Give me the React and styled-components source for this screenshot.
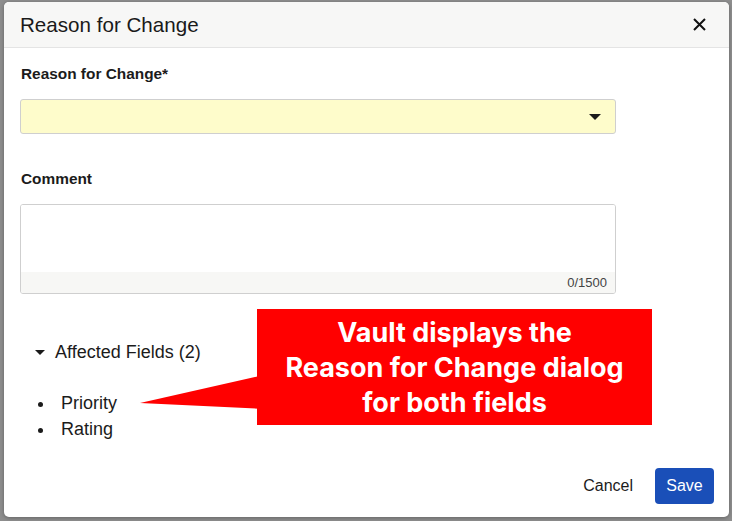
import React from 'react';
import styled, { createGlobalStyle } from 'styled-components';

const GlobalStyle = createGlobalStyle`
  html, body {
    margin: 0;
    padding: 0;
    background: #8e8e8e;
  }
  body {
    font-family: "Liberation Sans", Arial, sans-serif;
    color: #1b1b1b;
  }
`;

const Backdrop = styled.div`
  width: 732px;
  height: 521px;
  box-sizing: border-box;
  padding: 2px 3px 4px 4px;
  background: #8e8e8e;
`;

const Dialog = styled.div`
  position: relative;
  height: 100%;
  display: flex;
  flex-direction: column;
  background: #fff;
  border-radius: 5px;
  overflow: hidden;
  box-shadow: 0 1px 4px rgba(0, 0, 0, 0.3);
`;

const Header = styled.div`
  height: 45px;
  flex: none;
  display: flex;
  align-items: center;
  justify-content: space-between;
  padding: 0 20px 0 16px;
  background: #f7f7f6;
  border-bottom: 1px solid #e4e4e4;
`;

const Title = styled.h1`
  margin: 0;
  font-size: 20.6px;
  font-weight: 400;
  color: #1a1a1a;
`;

const CloseButton = styled.button`
  width: 20px;
  height: 20px;
  padding: 0;
  border: none;
  background: transparent;
  display: flex;
  align-items: center;
  justify-content: center;
  cursor: pointer;
`;

const Body = styled.div`
  flex: 1;
  padding: 17px 0 0 16px;
`;

const Field = styled.div`
  width: 596px;
  margin-bottom: ${(p) => p.$gap || 0}px;
`;

const Label = styled.div`
  font-size: 15.4px;
  font-weight: 700;
  line-height: 18px;
  margin: 0 0 16px 1px;
`;

const Select = styled.div`
  height: 35px;
  box-sizing: border-box;
  border: 1px solid #cfcfcf;
  border-radius: 3px;
  background: #fefccb;
  display: flex;
  align-items: center;
  justify-content: flex-end;
  padding-right: 14px;
`;

const Caret = styled.span`
  width: 0;
  height: 0;
  border-left: ${(p) => p.$size}px solid transparent;
  border-right: ${(p) => p.$size}px solid transparent;
  border-top: ${(p) => p.$size}px solid #1a1a1a;
`;

const TextArea = styled.div`
  height: 90px;
  box-sizing: border-box;
  border: 1px solid #cfcfcf;
  border-radius: 3px;
  display: flex;
  flex-direction: column;
  overflow: hidden;
`;

const TextInput = styled.div`
  flex: 1;
  background: #fff;
`;

const Counter = styled.div`
  height: 21px;
  background: #f7f7f5;
  font-size: 13px;
  color: #444;
  text-align: right;
  padding-right: 8px;
  line-height: 22px;
`;

const Section = styled.div`
  margin: 48px 0 0 15px;
`;

const Toggle = styled.div`
  display: flex;
  align-items: center;
  gap: 10px;
  font-size: 18px;
  color: #1b1b1b;
`;

const FieldList = styled.ul`
  margin: 27px 0 0 -6px;
  padding: 0 0 0 26px;
  font-size: 18px;
  line-height: 26px;
  li {
    padding-left: 6px;
  }
`;

const Footer = styled.div`
  flex: none;
  display: flex;
  justify-content: flex-end;
  align-items: center;
  gap: 22px;
  padding: 0 15px 13px 0;
`;

const TextButton = styled.button`
  border: none;
  background: transparent;
  font-family: inherit;
  font-size: 16px;
  color: #1b1b1b;
  padding: 0;
  cursor: pointer;
`;

const PrimaryButton = styled.button`
  width: 59px;
  height: 36px;
  border: none;
  border-radius: 4px;
  background: #1a4fb8;
  color: #fff;
  font-family: inherit;
  font-size: 16px;
  cursor: pointer;
`;

const Callout = styled.div`
  position: absolute;
  left: 253px;
  top: 307px;
  width: 395px;
  height: 116px;
  background: #ff0000;
  color: #fff;
  font-family: Inter, sans-serif;
  font-weight: 700;
  font-size: 27px;
  line-height: 35px;
  text-align: center;
  display: flex;
  align-items: center;
  justify-content: center;
`;

const Pointer = styled.svg`
  position: absolute;
  left: 135px;
  top: 372px;
`;

export default function App() {
  return (
    <>
      <GlobalStyle />
      <Backdrop>
        <Dialog>
          <Header>
            <Title>Reason for Change</Title>
            <CloseButton aria-label="Close">
              <svg width="13" height="13" viewBox="0 0 13 13">
                <path d="M1 1L12 12M12 1L1 12" stroke="#111" strokeWidth="2" />
              </svg>
            </CloseButton>
          </Header>
          <Body>
            <Field $gap={36}>
              <Label>Reason for Change*</Label>
              <Select>
                <Caret $size={6} />
              </Select>
            </Field>
            <Field>
              <Label>Comment</Label>
              <TextArea>
                <TextInput />
                <Counter>0/1500</Counter>
              </TextArea>
            </Field>
            <Section>
              <Toggle>
                <Caret $size={5} />
                Affected Fields (2)
              </Toggle>
              <FieldList>
                <li>Priority</li>
                <li>Rating</li>
              </FieldList>
            </Section>
          </Body>
          <Footer>
            <TextButton>Cancel</TextButton>
            <PrimaryButton>Save</PrimaryButton>
          </Footer>
          <Pointer width="125" height="40" viewBox="0 0 125 40">
            <polygon points="125,1 1,29 125,35" fill="#ff0000" />
          </Pointer>
          <Callout>
            Vault displays the
            <br />
            Reason for Change dialog
            <br />
            for both fields
          </Callout>
        </Dialog>
      </Backdrop>
    </>
  );
}
